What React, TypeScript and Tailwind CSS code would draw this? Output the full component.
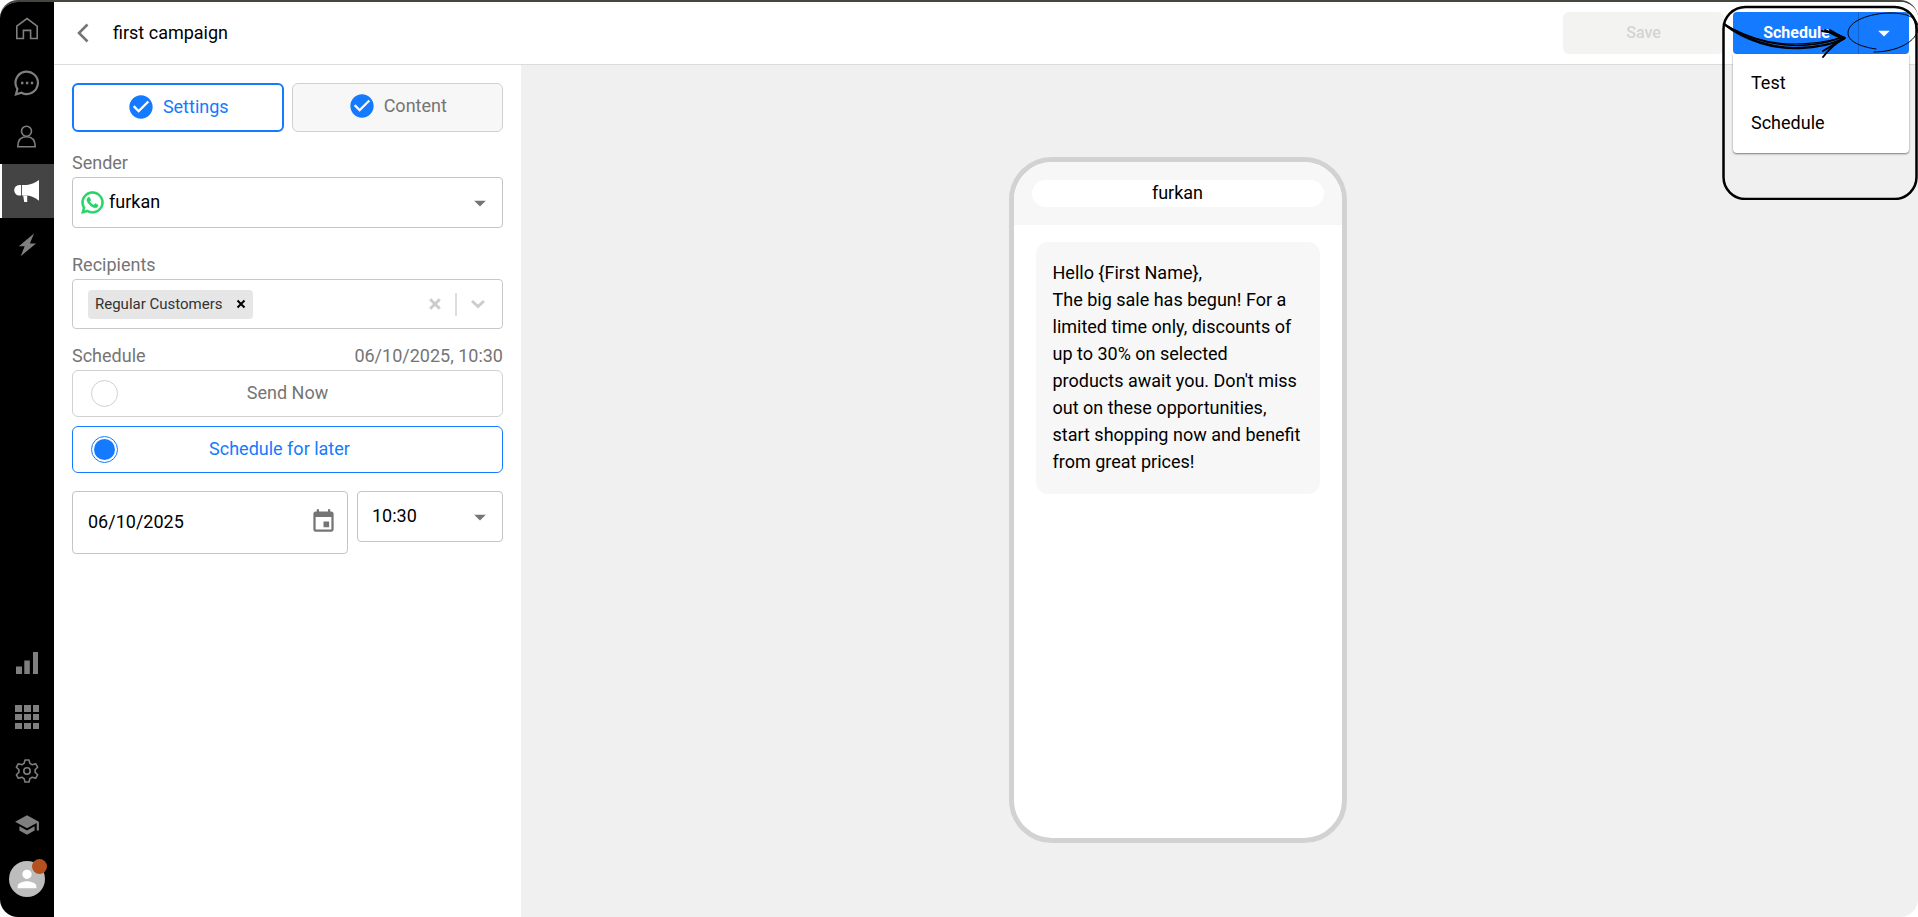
import { useState } from "react";
import { FaWhatsapp } from "react-icons/fa";
import { MdArrowDropDown, MdCheckCircle, MdEvent, MdPerson, MdSchool } from "react-icons/md";

type IconName = "home" | "chat" | "user" | "campaign" | "bolt" | "stats" | "apps" | "settings" | "learn";

interface NavItem {
  id: IconName;
  label: string;
}

const mainNav: NavItem[] = [
  { id: "home", label: "Home" },
  { id: "chat", label: "Chats" },
  { id: "user", label: "Contacts" },
  { id: "campaign", label: "Campaigns" },
  { id: "bolt", label: "Automations" },
];

const bottomNav: NavItem[] = [
  { id: "stats", label: "Reports" },
  { id: "apps", label: "Apps" },
  { id: "settings", label: "Settings" },
  { id: "learn", label: "Academy" },
];

const message =
  "Hello {First Name},\nThe big sale has begun! For a limited time only, discounts of up to 30% on selected products await you. Don't miss out on these opportunities, start shopping now and benefit from great prices!";

function NavIcon({ name }: { name: IconName }) {
  if (name === "learn") return <MdSchool className="size-[26px]" />;

  return (
    <svg viewBox="0 0 26 26" className="size-[26px]" fill="none" stroke="currentColor" strokeWidth="1.6">
      {name === "home" && <path d="M2.8 10.2 13 2.5l10.2 7.7v12.3h-6.6v-8.1H9.4v8.1H2.8z" />}
      {name === "chat" && (
        <>
          <path d="M3.400 19A11.200 11.200 0 1 1 7.500 22.700L2 24.300z" strokeWidth="2.200" />
          <path d="M7 11.800h2.400v2.400H7zM11.900 11.800h2.400v2.400h-2.400zM16.800 11.800h2.400v2.400h-2.400z" fill="currentColor" stroke="none" />
        </>
      )}
      {name === "user" && (
        <>
          <circle cx="12.500" cy="7.200" r="5" />
          <path d="M3.800 22.700c0-6 3-10 8.700-10s8.700 4 8.700 10z" />
        </>
      )}
      {name === "campaign" && (
        <g fill="currentColor" stroke="none">
          <path d="M7 7v10.600H5.200A5 5.300 0 0 1 5.200 7zM7.900 7H13c4.500-.5 8.500-2.200 12-4.900v20.700c-3.500-3-7.500-4.700-12-5.200H7.900z" />
          <path d="M9.200 17.500h4v6.600h-3z" />
        </g>
      )}
      {name === "bolt" && <path d="M20 1.500 4.800 14.200h5.900L6.600 24.300l15.400-12.900h-6.100z" fill="currentColor" stroke="none" />}
      {name === "stats" && <path d="M2 16.500h6V24H2zM10.300 10.500h5.500V24h-5.500zM19 2h5v22h-5z" fill="currentColor" stroke="none" />}
      {name === "apps" && (
        <path
          d="M1 1h7v7H1zM10 1h7v7h-7zM19 1h6v7h-6zM1 10h7v6H1zM10 10h7v6h-7zM19 10h6v6h-6zM1 19h7v6H1zM10 19h7v6h-7zM19 19h6v6h-6z"
          fill="currentColor"
          stroke="none"
        />
      )}
      {name === "settings" && (
        <>
          <path d="M11 2h4l.9 3.400 2.300 1.300 3.400-1 2 3.500-2.500 2.500v2.600l2.500 2.500-2 3.500-3.400-1-2.300 1.300L15 24h-4l-.9-3.400-2.300-1.300-3.400 1-2-3.500 2.500-2.500v-2.600L2.400 9.200l2-3.500 3.400 1 2.300-1.300z" strokeLinejoin="round" />
          <circle cx="13" cy="13" r="3.200" />
        </>
      )}
    </svg>
  );
}

function Sidebar() {
  return (
    <aside className="flex w-[54px] shrink-0 flex-col justify-between bg-black pb-[11px] text-[#7f7f7f]">
      <nav>
        {mainNav.map((item) => (
          <a
            key={item.id}
            href={`#${item.id}`}
            aria-label={item.label}
            className={
              item.id === "campaign"
                ? "flex h-[54px] items-center justify-center border-l-2 border-white bg-[#444] pr-0.5 text-white"
                : "flex h-[54px] items-center justify-center"
            }
          >
            <NavIcon name={item.id} />
          </a>
        ))}
      </nav>
      <nav>
        {bottomNav.map((item) => (
          <a key={item.id} href={`#${item.id}`} aria-label={item.label} className="flex h-[54px] items-center justify-center">
            <NavIcon name={item.id} />
          </a>
        ))}
        <a href="#profile" aria-label="Profile" className="flex h-[54px] items-center justify-center">
          <span className="relative flex size-9 items-center justify-center rounded-full bg-[#bdbdbd] text-white">
            <MdPerson className="size-7" />
            <span className="absolute -top-0.5 -right-0.5 size-[15px] rounded-full bg-[#b5501f]" />
          </span>
        </a>
      </nav>
    </aside>
  );
}

function ScheduleMenu() {
  const [open, setOpen] = useState(true);

  return (
    <div className="relative w-44">
      <div className="flex h-[42px] overflow-hidden rounded bg-[#147aff] text-white">
        <button type="button" className="flex-1 border-r border-[#1262cc] pl-0.5 text-base font-bold">Schedule</button>
        <button type="button" aria-label="More actions" onClick={() => setOpen(!open)} className="flex w-[50px] items-center justify-center">
          <MdArrowDropDown className="size-7" />
        </button>
      </div>
      {open && (
        <div className="absolute inset-x-0 top-full z-10 rounded-b bg-white pt-[9px] pb-[10px] shadow-[0_1px_2px_rgba(0,0,0,0.5)]">
          <button type="button" className="block h-10 w-full px-[18px] text-left">Test</button>
          <button type="button" className="block h-10 w-full px-[18px] text-left">Schedule</button>
        </div>
      )}
      <Annotation />
    </div>
  );
}

// Hand drawn frame and arrow over the schedule button
function Annotation() {
  return (
    <svg viewBox="0 0 200 200" className="pointer-events-none absolute -top-3 -right-[9px] z-20 h-[200px] w-[200px]" fill="none" stroke="#000" strokeLinecap="round">
      <rect x="5.500" y="7" width="193" height="192" rx="22" strokeWidth="2.500" />
      <path d="M6 24c22 17 50 25 76 24 16-.5 30-3 43-9" strokeWidth="2.400" />
      <path d="M9 26c26 15 54 21 80 19 14-1 26-4 35-8" strokeWidth="1.500" />
      <path d="M17 30c18 9 38 14 58 14 18 0 33-2 47-6" strokeWidth="1.200" />
      <path d="M104 31c9 1 17 4 23 7-9 5-16 11-22 19" strokeWidth="2" strokeLinejoin="round" />
      <path d="M107 30l18 9-20 12M112 30l12 7" strokeWidth="2" />
      <path d="M158 49c-14-2-28-7-28-16 0-12 22-20 43-20 16 0 27 5 27 14 0 15-22 25-44 25" strokeWidth="1" />
    </svg>
  );
}

function Header() {
  return (
    <header className="flex h-[63px] items-center border-b border-[#dcdcdc] bg-white pr-[9px] pb-px pl-[18px]">
      <button type="button" aria-label="Back" className="mr-[19px] flex size-[22px] items-center justify-center text-[#757575]">
        <svg viewBox="0 0 22 22" className="size-[22px]" fill="none" stroke="currentColor" strokeWidth="2.600">
          <path d="M15.500 2.500 7 11l8.500 8.500" />
        </svg>
      </button>
      <h1 className="flex-1">first campaign</h1>
      <button type="button" disabled className="mr-[9px] h-[42px] w-[161px] rounded-md bg-[#f3f3f2] text-base font-medium text-[#d4d4d4]">Save</button>
      <ScheduleMenu />
    </header>
  );
}

function SettingsPanel() {
  const [timing, setTiming] = useState("later");

  return (
    <section className="w-[467px] shrink-0 bg-white px-[18px] pt-[18px] text-[#757575]">
      <div className="grid grid-cols-2 gap-2">
        <button type="button" className="flex h-[49px] items-center justify-center gap-2 rounded-md border-2 border-[#147aff] pb-0.5 text-[#147aff]">
          <MdCheckCircle className="size-7" />
          Settings
        </button>
        <button type="button" className="flex h-[49px] items-center justify-center gap-2 rounded-md border border-[#d0d0d0] bg-[#f7f7f7] pb-1">
          <MdCheckCircle className="size-7 text-[#147aff]" />
          Content
        </button>
      </div>

      <label htmlFor="sender" className="mt-[17px] block">Sender</label>
      <div className="relative mt-px text-black">
        <FaWhatsapp strokeWidth="14" stroke="currentColor" className="absolute top-[13px] left-2 size-[25px] text-[#25d366]" />
        <select id="sender" className="h-[51px] w-full appearance-none rounded border border-[#c4c4c4] bg-white pb-0.5 pl-9">
          <option>furkan</option>
        </select>
        <MdArrowDropDown className="pointer-events-none absolute top-3 right-[9px] size-7 text-[#757575]" />
      </div>

      <label htmlFor="recipients" className="mt-[23px] block">Recipients</label>
      <div className="mt-px flex h-[50px] items-center rounded border border-[#c8c8c8] pl-[15px]">
        <span className="flex h-[29px] items-center rounded-sm bg-[#e6e6e6] px-[7px] text-[15px] text-[#333]">
          Regular Customers
          <button type="button" aria-label="Remove Regular Customers" className="ml-[13px] text-black">
            <svg viewBox="0 0 10 10" className="size-[10px]" stroke="currentColor" strokeWidth="2">
              <path d="m1.500 1.500 7 7m0-7-7 7" />
            </svg>
          </button>
        </span>
        <input id="recipients" className="min-w-0 flex-1 px-1 outline-none" />
        <button type="button" aria-label="Clear recipients" className="text-[#ccc]">
          <svg viewBox="0 0 12 12" className="size-3" stroke="currentColor" strokeWidth="3">
            <path d="m1.200 1.200 9.600 9.600m0-9.600-9.600 9.600" />
          </svg>
        </button>
        <span className="mx-[14px] h-[23px] w-0.5 bg-[#ddd]" />
        <button type="button" aria-label="Show recipients" className="mr-[17px] text-[#ccc]">
          <svg viewBox="0 0 14 10" className="h-[10px] w-[14px]" fill="none" stroke="currentColor" strokeWidth="2.800">
            <path d="m1 2 6 5.500L13 2" />
          </svg>
        </button>
      </div>

      <div className="mt-[13px] flex justify-between">
        <span>Schedule</span>
        <span>06/10/2025, 10:30</span>
      </div>
      <div className="mt-px space-y-[9px]">
        <label className="relative flex h-[47px] items-center justify-center rounded-md border border-[#d0d0d0] pb-0.5">
          <input type="radio" name="timing" checked={timing === "now"} onChange={() => setTiming("now")} className="absolute top-[9px] left-[18px] size-[27px] appearance-none rounded-full border border-[#d0d0d0] bg-clip-content p-0.5 checked:border-[#147aff] checked:bg-[#147aff]" />
          Send Now
        </label>
        <label className="relative flex h-[47px] items-center justify-center rounded-md border border-[#147aff] pr-4 pb-0.5 text-[#147aff]">
          <input type="radio" name="timing" checked={timing === "later"} onChange={() => setTiming("later")} className="absolute top-[9px] left-[18px] size-[27px] appearance-none rounded-full border border-[#d0d0d0] bg-clip-content p-0.5 checked:border-[#147aff] checked:bg-[#147aff]" />
          Schedule for later
        </label>
      </div>

      <div className="mt-[18px] flex items-start gap-[9px] text-black">
        <div className="flex h-[63px] min-w-0 flex-1 items-center rounded border border-[#c4c4c4] pr-[10px] pb-0.5 pl-[15px]">
          <input aria-label="Date" defaultValue="06/10/2025" className="min-w-0 flex-1 outline-none" />
          <button type="button" aria-label="Choose date" className="text-[#757575]">
            <MdEvent className="size-[27px]" />
          </button>
        </div>
        <div className="relative w-[146px] shrink-0">
          <select aria-label="Time" className="h-[51px] w-full appearance-none rounded border border-[#c4c4c4] bg-white pb-0.5 pl-[14px]">
            <option>10:30</option>
          </select>
          <MdArrowDropDown className="pointer-events-none absolute top-3 right-[9px] size-7 text-[#757575]" />
        </div>
      </div>
    </section>
  );
}

function PhonePreview() {
  return (
    <section className="flex flex-1 items-start justify-center bg-[#f0f0f0] pt-[92px] pr-[84px]">
      <div className="h-[686px] w-[338px] overflow-hidden rounded-[43px] border-[5px] border-[#d2d2d2] bg-white">
        <div className="h-[63px] bg-[#f7f7f7] px-[18px] pt-[18px]">
          <div className="h-[27px] rounded-full bg-white text-center leading-[26px]">furkan</div>
        </div>
        <p className="mx-[22px] mt-[17px] rounded-xl bg-[#f7f7f7] px-[17px] pt-[17px] pb-[19px] whitespace-pre-line">{message}</p>
      </div>
    </section>
  );
}

export default function App() {
  return (
    <div className="min-h-screen bg-white font-[Roboto,sans-serif] text-[18px] leading-[27px] text-black">
      <div className="flex min-h-screen overflow-hidden rounded-[18px] border-t-2 border-[#444740]">
        <Sidebar />
        <div className="flex min-w-0 flex-1 flex-col">
          <Header />
          <main className="flex flex-1">
            <SettingsPanel />
            <PhonePreview />
          </main>
        </div>
      </div>
    </div>
  );
}
